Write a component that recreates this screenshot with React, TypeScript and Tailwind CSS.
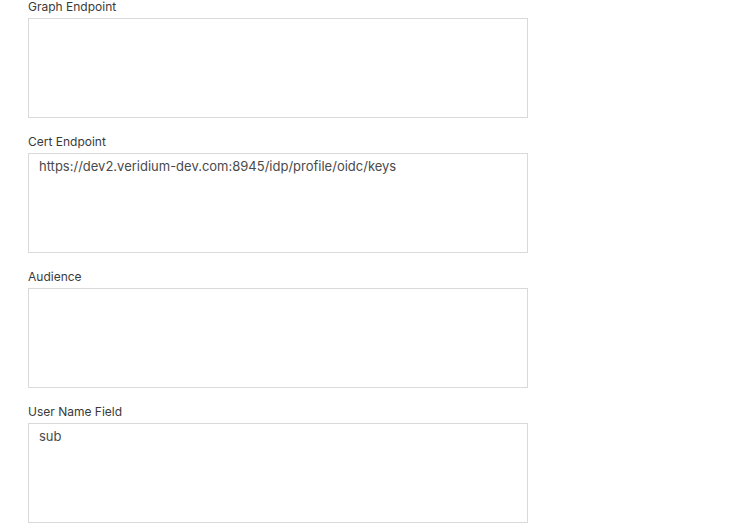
const fields = [
  { label: 'Graph Endpoint', value: '' },
  { label: 'Cert Endpoint', value: 'https://dev2.veridium-dev.com:8945/idp/profile/oidc/keys' },
  { label: 'Audience', value: '' },
  { label: 'User Name Field', value: 'sub' },
];

export default function App() {
  return (
    <div className="min-h-screen bg-white px-[28px] font-['Inter',sans-serif]">
      {fields.map((f) => (
        <div key={f.label} className="mb-[17px] flex w-[500px] flex-col">
          <label className="mb-[4px] text-[12px] leading-[14px] text-[#3a3a3a]">{f.label}</label>
          <textarea
            defaultValue={f.value}
            className="h-[100px] w-full resize-none border border-[#d9d9d9] px-[10px] pt-[4px] pb-[5px] text-[13px] leading-[16px] text-[#4a4a4a] outline-none"
          />
        </div>
      ))}
    </div>
  );
}
